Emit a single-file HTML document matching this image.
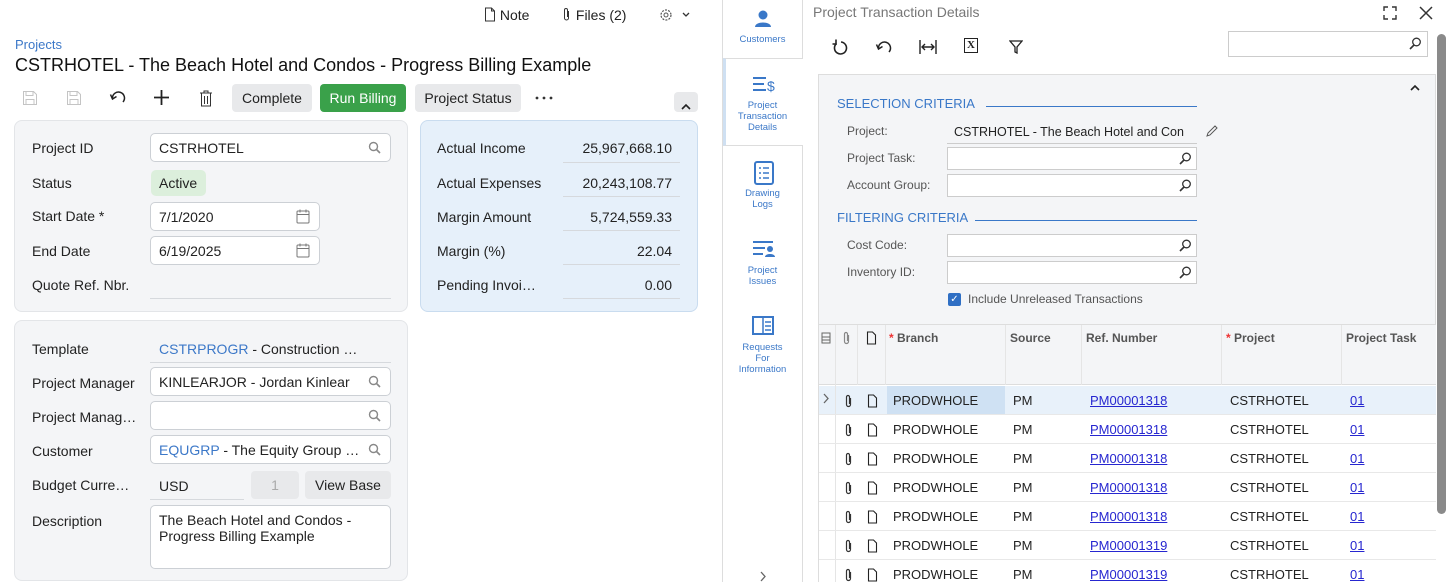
<!DOCTYPE html>
<html><head><meta charset="utf-8">
<style>
*{box-sizing:border-box;margin:0;padding:0}
html{width:1453px;height:582px;overflow:hidden}
body{width:1453px;height:582px;overflow:hidden;background:#fff;font-family:"Liberation Sans",Arial,sans-serif;font-size:14px;color:#222;position:relative}
.a{position:absolute}
.box{position:absolute;background:#f4f5f7;border:1px solid #e3e5e8;border-radius:8px}
.lbl{position:absolute;font-size:14px;color:#222}
.inp{position:absolute;background:#fff;border:1px solid #ccd0d5;border-radius:5px;height:29px;padding:6px 8px;font-size:14px;white-space:nowrap;overflow:hidden}
.ul{position:absolute;border-bottom:1px solid #d6d9dd}
.btn{position:absolute;height:28px;border-radius:4px;background:#e8e9eb;font-size:14px;text-align:center;line-height:28px}
.blue{color:#3c78c8}
.val{position:absolute;text-align:right;font-size:14px}
.rl{position:absolute;font-size:12px;color:#555}
.ri{position:absolute;background:#fff;border:1px solid #ccc;height:23px;width:250px}
.sb{position:absolute;left:723px;width:79px;text-align:center;font-size:9.5px;color:#3b78c8;line-height:11px}
.g{position:absolute;font-size:13px}
.link{color:#2626d0;text-decoration:underline}
.srch{position:absolute;right:9px;top:7px}
.rs{position:absolute;right:4px;top:4px}
</style></head><body>

<div class="a" style="left:484px;top:7px;font-size:14px">
<svg width="12" height="15" style="vertical-align:-2px"><path d="M1.5 1h6l3 3v10h-9z M7.5 1v3h3" fill="none" stroke="#333"/></svg> Note</div>
<div class="a" style="left:562px;top:7px;font-size:14px">
<svg width="10" height="15" style="vertical-align:-2px"><path d="M6.5 4v7a2 2 0 0 1-4 0V3a1.5 1.5 0 0 1 3 0v7" fill="none" stroke="#333"/></svg> Files (2)</div>
<svg class="a" style="left:659px;top:8px" width="32" height="15"><circle cx="7" cy="7" r="5" fill="none" stroke="#555" stroke-width="1.2" stroke-dasharray="2 1.2"/><circle cx="7" cy="7" r="2" fill="none" stroke="#555"/><path d="M24 5l3 3 3-3" fill="none" stroke="#333" stroke-width="1.3"/></svg>

<div class="a blue" style="left:15px;top:37px;font-size:13px">Projects</div>
<div class="a" style="left:15px;top:55px;font-size:18px;color:#111">CSTRHOTEL - The Beach Hotel and Condos - Progress Billing Example</div>

<svg class="a" style="left:22px;top:90px" width="16" height="16"><path d="M1.5 1.5h10l3 3v10h-13z M4 1.5v4h7v-4 M4 14.5v-5h8v5" fill="none" stroke="#c4c4c4"/></svg>
<svg class="a" style="left:66px;top:90px" width="16" height="16"><path d="M1.5 1.5h10l3 3v10h-13z M4 1.5v4h7v-4 M4 14.5v-5h8v5" fill="none" stroke="#c4c4c4"/></svg>
<svg class="a" style="left:109px;top:89px" width="18" height="16"><path d="M3.5 9.5A6 6 0 1 1 14 13" fill="none" stroke="#222" stroke-width="1.5"/><path d="M1.5 5.5l2 4.5 4-2.5" fill="none" stroke="#222" stroke-width="1.5"/></svg>
<svg class="a" style="left:153px;top:89px" width="17" height="17"><path d="M8.5 1v15M1 8.5h15" stroke="#222" stroke-width="1.8"/></svg>
<svg class="a" style="left:199px;top:90px" width="14" height="17"><path d="M1 3h12M5 3V1h4v2M2.5 3v13h9V3M5.5 6v8M8.5 6v8" fill="none" stroke="#333"/></svg>
<div class="btn" style="left:232px;top:84px;width:80px">Complete</div>
<div class="btn" style="left:320px;top:84px;width:86px;background:#3aa14a;color:#fff">Run Billing</div>
<div class="btn" style="left:415px;top:84px;width:106px">Project Status</div>
<svg class="a" style="left:535px;top:96px" width="18" height="4"><circle cx="2" cy="2" r="1.4" fill="#333"/><circle cx="9" cy="2" r="1.4" fill="#333"/><circle cx="16" cy="2" r="1.4" fill="#333"/></svg>
<div class="btn" style="left:674px;top:92px;width:24px;height:20px"><svg width="10" height="8" style="margin-top:6px"><path d="M1 6l4-4 4 4" fill="none" stroke="#222" stroke-width="1.6"/></svg></div>

<div class="box" style="left:14px;top:120px;width:394px;height:192px"></div>
<div class="lbl" style="left:32px;top:140px">Project ID</div>
<div class="inp" style="left:150px;top:133px;width:241px">CSTRHOTEL<span class="srch S"></span></div>
<div class="lbl" style="left:32px;top:175px">Status</div>
<div class="a" style="left:151px;top:170px;width:55px;height:26px;background:#dcefdc;border-radius:5px;padding:5px 8px">Active</div>
<div class="lbl" style="left:32px;top:208px">Start Date *</div>
<div class="inp" style="left:150px;top:202px;width:170px">7/1/2020<span class="srch C"></span></div>
<div class="lbl" style="left:32px;top:243px">End Date</div>
<div class="inp" style="left:150px;top:236px;width:170px">6/19/2025<span class="srch C"></span></div>
<div class="lbl" style="left:32px;top:277px">Quote Ref. Nbr.</div>
<div class="ul" style="left:150px;top:298px;width:241px"></div>

<div class="box" style="left:420px;top:120px;width:278px;height:192px;background:#e6f0fa;border-color:#c9dcef"></div>
<div class="lbl" style="left:437px;top:140px">Actual Income</div><div class="val" style="left:560px;top:140px;width:112px">25,967,668.10</div><div class="ul" style="left:563px;top:162px;width:117px"></div>
<div class="lbl" style="left:437px;top:175px">Actual Expenses</div><div class="val" style="left:560px;top:175px;width:112px">20,243,108.77</div><div class="ul" style="left:563px;top:196px;width:117px"></div>
<div class="lbl" style="left:437px;top:209px">Margin Amount</div><div class="val" style="left:560px;top:209px;width:112px">5,724,559.33</div><div class="ul" style="left:563px;top:230px;width:117px"></div>
<div class="lbl" style="left:437px;top:243px">Margin (%)</div><div class="val" style="left:560px;top:243px;width:112px">22.04</div><div class="ul" style="left:563px;top:264px;width:117px"></div>
<div class="lbl" style="left:437px;top:277px">Pending Invoi…</div><div class="val" style="left:560px;top:277px;width:112px">0.00</div><div class="ul" style="left:563px;top:298px;width:117px"></div>

<div class="box" style="left:14px;top:320px;width:394px;height:261px"></div>
<div class="lbl" style="left:32px;top:341px">Template</div>
<div class="a" style="left:159px;top:341px"><span class="blue">CSTRPROGR</span> - Construction …</div>
<div class="ul" style="left:150px;top:362px;width:241px"></div>
<div class="lbl" style="left:32px;top:375px">Project Manager</div>
<div class="inp" style="left:150px;top:367px;width:241px">KINLEARJOR - Jordan Kinlear<span class="srch S"></span></div>
<div class="lbl" style="left:32px;top:409px">Project Manag…</div>
<div class="inp" style="left:150px;top:401px;width:241px"><span class="srch S"></span></div>
<div class="lbl" style="left:32px;top:443px">Customer</div>
<div class="inp" style="left:150px;top:435px;width:241px"><span class="blue">EQUGRP</span> - The Equity Group …<span class="srch S" style="background:#fff"></span></div>
<div class="lbl" style="left:32px;top:477px">Budget Curre…</div>
<div class="a" style="left:159px;top:478px">USD</div>
<div class="ul" style="left:150px;top:499px;width:94px"></div>
<div class="btn" style="left:251px;top:471px;width:48px;color:#aaa">1</div>
<div class="btn" style="left:305px;top:471px;width:86px">View Base</div>
<div class="lbl" style="left:32px;top:513px">Description</div>
<div class="inp" style="left:150px;top:505px;width:241px;height:64px;white-space:normal;line-height:16px">The Beach Hotel and Condos - Progress Billing Example</div>

<div class="a" style="left:722px;top:0;width:1px;height:582px;background:#ddd"></div>
<div class="a" style="left:802px;top:0;width:1px;height:582px;background:#ddd"></div>
<div class="a" style="left:723px;top:58px;width:80px;height:88px;background:#fff;border-top:1px solid #ddd;border-bottom:1px solid #ddd;border-left:3px solid #cfe0f2"></div>
<svg class="a" style="left:754px;top:9px" width="18" height="20"><circle cx="9" cy="6" r="4.5" fill="#3a78c8"/><path d="M1 18c0-6 16-6 16 0z" fill="#3a78c8"/></svg>
<div class="sb" style="top:34px">Customers</div>
<svg class="a" style="left:752px;top:75px" width="24" height="18"><path d="M1 3h13M1 9h11M1 15h13" stroke="#3a78c8" stroke-width="2"/><text x="15" y="16" font-size="14" fill="#3a78c8" font-family="Liberation Sans">$</text></svg>
<div class="sb" style="top:100px">Project<br>Transaction<br>Details</div>
<svg class="a" style="left:753px;top:161px" width="22" height="24"><rect x="2" y="1" width="18" height="22" rx="2" fill="none" stroke="#3a78c8" stroke-width="2"/><path d="M6 7h2M10 7h6M6 12h2M10 12h6M6 17h2M10 17h6" stroke="#3a78c8" stroke-width="1.5"/></svg>
<div class="sb" style="top:188px">Drawing<br>Logs</div>
<svg class="a" style="left:752px;top:240px" width="24" height="18"><path d="M1 2h20M1 8h12M1 14h10" stroke="#3a78c8" stroke-width="2"/><circle cx="18" cy="9" r="3" fill="#3a78c8"/><path d="M13 17c0-4 10-4 10 0z" fill="#3a78c8"/></svg>
<div class="sb" style="top:265px">Project<br>Issues</div>
<svg class="a" style="left:752px;top:316px" width="22" height="20"><rect x="1" y="1" width="20" height="17" fill="none" stroke="#3a78c8" stroke-width="2"/><path d="M11 1v17M13 6h6M13 10h6M13 14h6" stroke="#3a78c8" stroke-width="1.5"/></svg>
<div class="sb" style="top:342px">Requests<br>For<br>Information</div>
<svg class="a" style="left:759px;top:571px" width="8" height="11"><path d="M2 1l4 4.5L2 10" fill="none" stroke="#666" stroke-width="1.3"/></svg>

<div class="a" style="left:813px;top:4px;font-size:14px;color:#777">Project Transaction Details</div>
<svg class="a" style="left:1383px;top:6px" width="14" height="14"><path d="M1 5V1h4M9 1h4v4M13 9v4H9M5 13H1V9" fill="none" stroke="#333" stroke-width="1.4"/></svg>
<svg class="a" style="left:1419px;top:6px" width="14" height="14"><path d="M1 1l12 12M13 1L1 13" stroke="#333" stroke-width="1.5"/></svg>
<svg class="a" style="left:832px;top:38px" width="16" height="18"><path d="M4.5 5.5A6 6 0 1 0 9 4" fill="none" stroke="#222" stroke-width="1.6"/><path d="M4 1.5v4.5h-3.5" fill="none" stroke="#222" stroke-width="1.6"/></svg>
<svg class="a" style="left:875px;top:39px" width="18" height="16"><path d="M3.5 9.5A6 6 0 1 1 14 13" fill="none" stroke="#222" stroke-width="1.5"/><path d="M1.5 5.5l2 4.5 4-2.5" fill="none" stroke="#222" stroke-width="1.5"/></svg>
<svg class="a" style="left:919px;top:39px" width="18" height="16"><path d="M1 1v14M17 1v14M3 8h12M6 5l-3 3 3 3M12 5l3 3-3 3" fill="none" stroke="#222" stroke-width="1.4"/></svg>
<div class="a" style="left:964px;top:38px;width:14px;height:15px;border:1.5px solid #222;font-size:11px;font-weight:bold;text-align:center;line-height:12px;font-family:'Liberation Serif',serif">X</div>
<svg class="a" style="left:1009px;top:40px" width="14" height="14"><path d="M1 1h12L8 7v6L6 12V7z" fill="none" stroke="#222" stroke-width="1.3"/></svg>
<div class="a" style="left:1228px;top:31px;width:200px;height:26px;border:1px solid #ccc;background:#fff"><span class="rs R" style="right:5px;top:5px"></span></div>
<div class="a" style="left:1437px;top:34px;width:9px;height:480px;background:#8a8a8a;border-radius:5px"></div>

<div class="a" style="left:818px;top:74px;width:618px;height:508px;background:#f4f5f7;border:1px solid #ddd;border-bottom:none"></div>
<svg class="a" style="left:1410px;top:84px" width="10" height="8"><path d="M1 6l4-4 4 4" fill="none" stroke="#222" stroke-width="1.6"/></svg>
<div class="a" style="left:837px;top:96px;font-size:13px;color:#3a78c8">SELECTION CRITERIA</div>
<div class="a" style="left:986px;top:106px;width:211px;height:1px;background:#3a78c8"></div>
<div class="rl" style="left:847px;top:124px">Project:</div>
<div class="a" style="left:954px;top:125px;font-size:12.5px">CSTRHOTEL - The Beach Hotel and Con</div>
<svg class="a" style="left:1205px;top:125px" width="13" height="13"><path d="M2 11l1-3 7-7 2 2-7 7z" fill="none" stroke="#555"/></svg>
<div class="a" style="left:947px;top:143px;width:250px;height:1px;background:#ccc"></div>
<div class="rl" style="left:847px;top:151px">Project Task:</div><div class="ri" style="left:947px;top:147px"><span class="rs R"></span></div>
<div class="rl" style="left:847px;top:178px">Account Group:</div><div class="ri" style="left:947px;top:174px"><span class="rs R"></span></div>
<div class="a" style="left:837px;top:210px;font-size:13px;color:#3a78c8">FILTERING CRITERIA</div>
<div class="a" style="left:975px;top:220px;width:222px;height:1px;background:#3a78c8"></div>
<div class="rl" style="left:847px;top:238px">Cost Code:</div><div class="ri" style="left:947px;top:234px"><span class="rs R"></span></div>
<div class="rl" style="left:847px;top:265px">Inventory ID:</div><div class="ri" style="left:947px;top:261px"><span class="rs R"></span></div>
<div class="a" style="left:948px;top:293px;width:13px;height:13px;background:#2f6fc4;border-radius:2px;color:#fff;font-size:10px;text-align:center;line-height:13px">✓</div>
<div class="rl" style="left:968px;top:292px">Include Unreleased Transactions</div>

<div class="a" style="left:819px;top:324px;width:617px;height:258px;background:#fff;border-top:1px solid #ddd"></div>
<div class="a" style="left:819px;top:325px;width:617px;height:60px;background:#f4f5f7;border-bottom:1px solid #ddd"></div>
<div class="a" style="left:819px;top:386px;width:617px;height:29px;background:#e8f1fa"></div>
<div class="a" style="left:887px;top:386px;width:118px;height:29px;background:#cfe1f3"></div>
<div class="a" style="left:835px;top:325px;width:1px;height:257px;background:#e5e5e5"></div>
<div class="a" style="left:857px;top:325px;width:1px;height:60px;background:#e5e5e5"></div>
<div class="a" style="left:885px;top:325px;width:1px;height:60px;background:#e5e5e5"></div>
<div class="a" style="left:1005px;top:325px;width:1px;height:60px;background:#e5e5e5"></div>
<div class="a" style="left:1081px;top:325px;width:1px;height:60px;background:#e5e5e5"></div>
<div class="a" style="left:1221px;top:325px;width:1px;height:60px;background:#e5e5e5"></div>
<div class="a" style="left:1341px;top:325px;width:1px;height:60px;background:#e5e5e5"></div>
<svg class="a" style="left:821px;top:332px" width="10" height="12"><rect x="1" y="1" width="8" height="10" fill="none" stroke="#666"/><path d="M1 5h8M1 8h8" stroke="#666"/></svg>
<span class="a P" style="left:842px;top:331px"></span>
<span class="a D" style="left:866px;top:331px"></span>
<div class="g" style="left:889px;top:331px;color:#555;font-weight:bold;font-size:12px"><span style="color:#e33">*</span> Branch</div>
<div class="g" style="left:1010px;top:331px;color:#555;font-weight:bold;font-size:12px">Source</div>
<div class="g" style="left:1086px;top:331px;color:#555;font-weight:bold;font-size:12px">Ref. Number</div>
<div class="g" style="left:1226px;top:331px;color:#555;font-weight:bold;font-size:12px"><span style="color:#e33">*</span> Project</div>
<div class="g" style="left:1346px;top:331px;color:#555;font-weight:bold;font-size:12px">Project Task</div>
<svg class="a" style="left:822px;top:393px" width="8" height="11"><path d="M2 1l4 4.5L2 10" fill="none" stroke="#666" stroke-width="1.3"/></svg>

<div id="rows"></div>
<script>
var S='<svg width="13" height="13"><circle cx="5.5" cy="5.5" r="4" fill="none" stroke="#888" stroke-width="1.4"/><path d="M8.5 8.5l3.5 3.5" stroke="#888" stroke-width="1.6"/></svg>';
var R='<svg width="13" height="13"><circle cx="7.5" cy="5" r="3.8" fill="none" stroke="#333" stroke-width="1.3"/><path d="M5 8l-4 4" stroke="#333" stroke-width="1.6"/></svg>';
var C='<svg width="14" height="15"><rect x="1" y="2" width="12" height="12" rx="1" fill="none" stroke="#777"/><path d="M1 5.5h12M4 0.5v3M10 0.5v3" stroke="#777"/></svg>';
var P='<svg width="10" height="14"><path d="M6.5 4v6.5a2 2 0 0 1-4 0V3a1.5 1.5 0 0 1 3 0v7" fill="none" stroke="#333" stroke-width="1.2"/></svg>';
var D='<svg width="11" height="14"><path d="M1.5 1h5l3 3v9h-8z" fill="none" stroke="#222" stroke-width="1.1"/></svg>';
document.querySelectorAll('.S').forEach(e=>e.innerHTML=S);
document.querySelectorAll('.R').forEach(e=>e.innerHTML=R);
document.querySelectorAll('.C').forEach(e=>{e.innerHTML=C;e.style.top='6px'});
document.querySelectorAll('.P').forEach(e=>e.innerHTML=P.replace('#333','#888'));
document.querySelectorAll('.D').forEach(e=>e.innerHTML=D);
var refs=["PM00001318","PM00001318","PM00001318","PM00001318","PM00001318","PM00001319","PM00001319"],h="";
for(var i=0;i<7;i++){var y=393+i*29;
h+='<div class="a" style="left:819px;top:'+(386+i*29+28)+'px;width:617px;height:1px;background:#e8e8e8"></div>';
h+='<div class="a" style="left:844px;top:'+(y+1)+'px">'+P+'</div><div class="a" style="left:867px;top:'+(y+1)+'px">'+D+'</div>';
h+='<div class="g" style="left:893px;top:'+y+'px">PRODWHOLE</div><div class="g" style="left:1013px;top:'+y+'px">PM</div>';
h+='<div class="g link" style="left:1090px;top:'+y+'px">'+refs[i]+'</div><div class="g" style="left:1230px;top:'+y+'px">CSTRHOTEL</div>';
h+='<div class="g link" style="left:1350px;top:'+y+'px">01</div>';}
document.getElementById("rows").outerHTML=h;
</script>
</body></html>
